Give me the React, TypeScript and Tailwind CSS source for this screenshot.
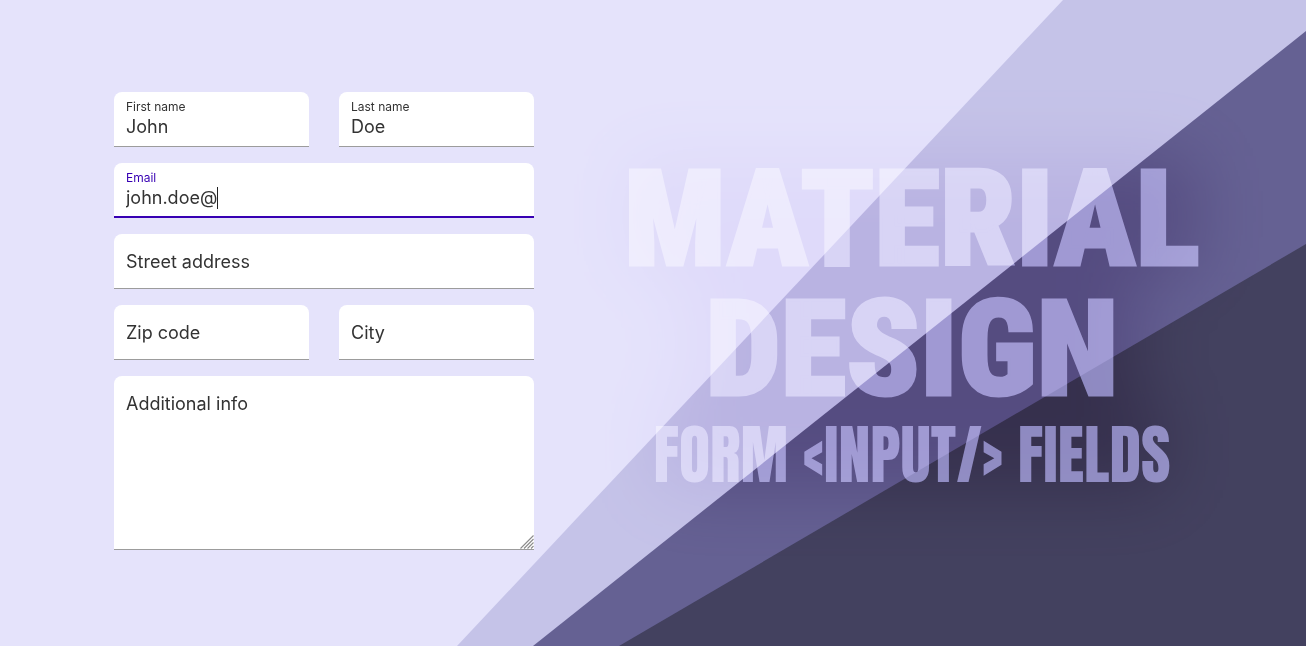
import { useState } from "react";

type FieldProps = {
  id: string;
  label: string;
  value?: string;
  type?: string;
  className?: string;
};

const box = "grid bg-white rounded-t-lg border-[#9c9c9c] text-[#333333]";

function Field({ id, label, value = "", type = "text", className = "" }: FieldProps) {
  const [text, setText] = useState(value);
  const labelStyle = text ? "pt-2 text-xs leading-[14px]" : "pt-3.5 text-lg leading-7";
  return (
    <div className={`${box} h-[55px] border-b ${className}`}>
      <label htmlFor={id} className={`col-start-1 row-start-1 self-start px-3 ${labelStyle}`}>
        {label}
      </label>
      <input
        id={id}
        type={type}
        value={text}
        onChange={(e) => setText(e.target.value)}
        className="col-start-1 row-start-1 min-w-0 bg-transparent px-3 pt-4 text-lg leading-6 outline-none"
      />
    </div>
  );
}

function ActiveField({ id, label, value = "", type = "text", className = "" }: FieldProps) {
  const [text, setText] = useState(value);
  return (
    <div className={`flex h-[55px] flex-col rounded-t-lg border-b-2 border-[#3700b3] bg-white px-3 pt-2 ${className}`}>
      <label htmlFor={id} className="text-xs leading-[14px] text-[#3700b3]">
        {label}
      </label>
      <div className="flex items-center">
        <input
          id={id}
          type={type}
          value={text}
          onChange={(e) => setText(e.target.value)}
          className="field-sizing-content bg-transparent text-lg leading-[26px] text-[#333333] caret-transparent outline-none"
        />
        <span className="h-[22px] w-px bg-[#222222]" />
      </div>
    </div>
  );
}

function ResizeGrip() {
  return (
    <svg
      aria-hidden="true"
      viewBox="0 0 14 14"
      className="pointer-events-none absolute right-0 bottom-0 h-3.5 w-3.5"
    >
      <path
        d="M0.5 13.5L13.5 0.5M4 13.5L13.5 4M7.5 13.5L13.5 7.5M11 13.5L13.5 11"
        stroke="#8c8c8c"
        strokeWidth="1.1"
      />
    </svg>
  );
}

function Backdrop() {
  return (
    <svg
      aria-hidden="true"
      viewBox="0 0 1306 646"
      preserveAspectRatio="none"
      className="absolute inset-0 h-full w-full"
    >
      <rect width="1306" height="646" fill="#e5e3fb" />
      <polygon points="1063,0 1306,0 1306,646 457,646" fill="#c5c3e8" />
      <polygon points="1306,31 1306,646 533,646" fill="#656193" />
      <polygon points="1306,244 1306,646 619,646" fill="#43415f" />
    </svg>
  );
}

function Glow() {
  return (
    <svg
      aria-hidden="true"
      viewBox="0 0 580 340"
      preserveAspectRatio="none"
      className="pointer-events-none absolute inset-0 h-full w-full overflow-visible mix-blend-soft-light"
    >
      <defs>
        <filter id="glow" x="-50%" y="-50%" width="200%" height="200%" colorInterpolationFilters="sRGB">
          <feGaussianBlur stdDeviation="36" />
        </filter>
      </defs>
      <g filter="url(#glow)" fill="#2a1020" fillOpacity="0.4">
        <path d="M5 5H575V120H515V250H545V335H33V250H65V120H5Z" />
      </g>
    </svg>
  );
}

export default function App() {
  return (
    <main className="relative isolate grid min-h-screen grid-cols-[420px_1fr] items-center gap-x-[88px] overflow-hidden pr-[104px] pl-[114px] font-[Inter,sans-serif]">
      <Backdrop />
      <form className="relative -mt-1 grid grid-cols-2 gap-x-[30px] gap-y-4">
        <Field id="first-name" label="First name" value="John" />
        <Field id="last-name" label="Last name" value="Doe" />
        <ActiveField id="email" label="Email" value="john.doe@" className="col-span-2" />
        <Field id="street" label="Street address" className="col-span-2" />
        <Field id="zip" label="Zip code" />
        <Field id="city" label="City" />
        <div className={`${box} relative col-span-2 border-b`}>
          <label htmlFor="info" className="col-start-1 row-start-1 px-3 pt-3.5 text-lg leading-7">
            Additional info
          </label>
          <textarea
            id="info"
            className="col-start-1 row-start-1 h-[173px] resize-y bg-transparent px-3 pt-3.5 text-lg leading-7 outline-none [&::-webkit-resizer]:bg-transparent"
          />
          <ResizeGrip />
        </div>
      </form>
      <section className="relative">
        <Glow />
        <h1 className="pt-1 text-center whitespace-nowrap text-[#706ea6] uppercase mix-blend-screen">
          <span className="block font-['Roboto_Condensed',Roboto,sans-serif] text-[134px] leading-[130px] font-black [-webkit-text-stroke:3px_#706ea6]">
            Material
            <br />
            Design
          </span>
          <span className="block font-[Impact,Anton,sans-serif] text-[64px] leading-[80px]">
            Form &lt;input/&gt; fields
          </span>
        </h1>
      </section>
    </main>
  );
}
